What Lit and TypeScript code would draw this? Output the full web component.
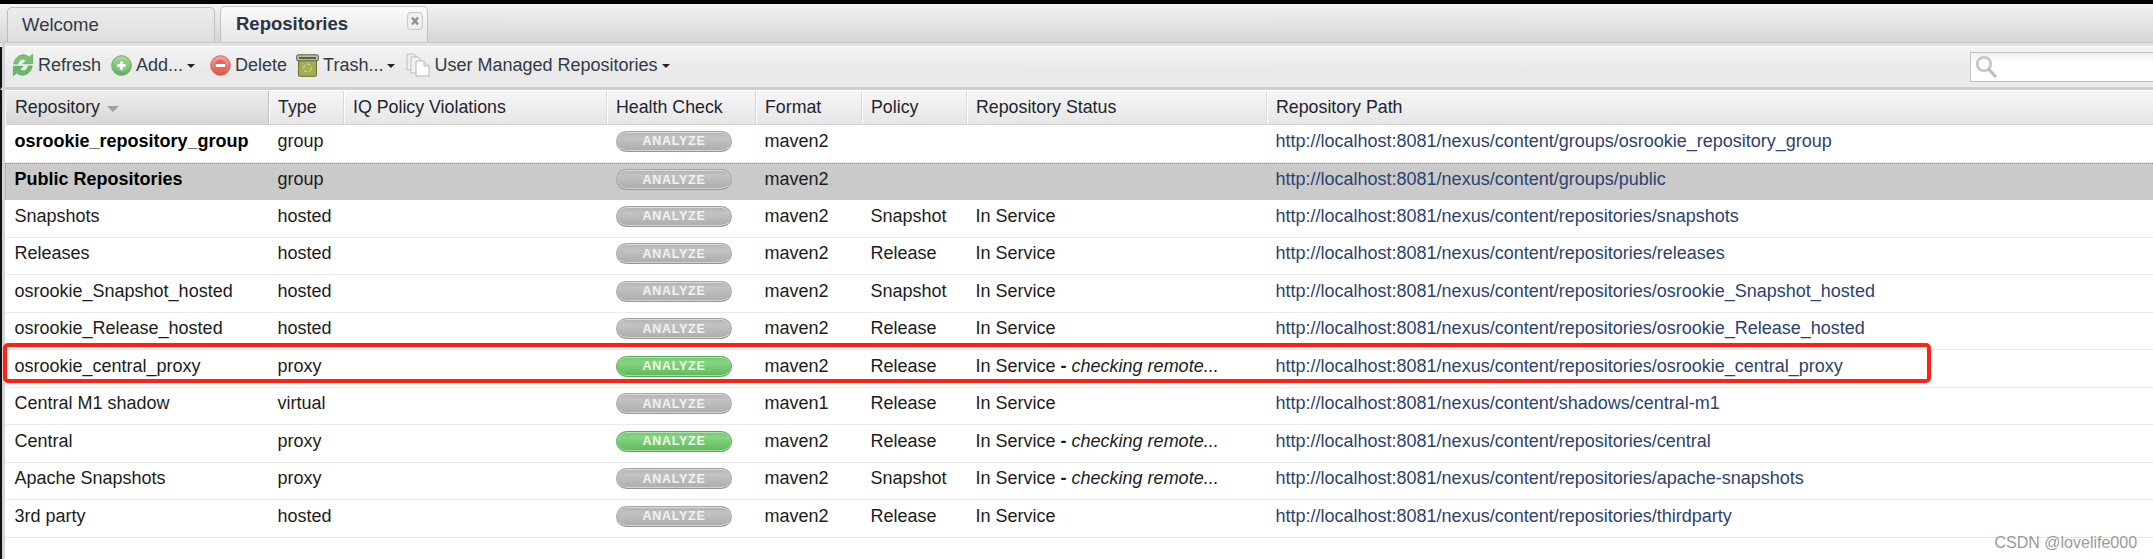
import { LitElement, html, css, svg } from "lit";
import { customElement } from "lit/decorators.js";

interface Row {
  name: string; type: string; green?: boolean; format: string; policy: string;
  status: string; checking?: boolean; path: string; bold?: boolean; selected?: boolean;
}

const P = "http://localhost:8081/nexus/content/";
const rows: Row[] = [
  { name: "osrookie_repository_group", type: "group", format: "maven2", policy: "", status: "", path: P + "groups/osrookie_repository_group", bold: true },
  { name: "Public Repositories", type: "group", format: "maven2", policy: "", status: "", path: P + "groups/public", bold: true, selected: true },
  { name: "Snapshots", type: "hosted", format: "maven2", policy: "Snapshot", status: "In Service", path: P + "repositories/snapshots" },
  { name: "Releases", type: "hosted", format: "maven2", policy: "Release", status: "In Service", path: P + "repositories/releases" },
  { name: "osrookie_Snapshot_hosted", type: "hosted", format: "maven2", policy: "Snapshot", status: "In Service", path: P + "repositories/osrookie_Snapshot_hosted" },
  { name: "osrookie_Release_hosted", type: "hosted", format: "maven2", policy: "Release", status: "In Service", path: P + "repositories/osrookie_Release_hosted" },
  { name: "osrookie_central_proxy", type: "proxy", green: true, format: "maven2", policy: "Release", status: "In Service", checking: true, path: P + "repositories/osrookie_central_proxy" },
  { name: "Central M1 shadow", type: "virtual", format: "maven1", policy: "Release", status: "In Service", path: P + "shadows/central-m1" },
  { name: "Central", type: "proxy", green: true, format: "maven2", policy: "Release", status: "In Service", checking: true, path: P + "repositories/central" },
  { name: "Apache Snapshots", type: "proxy", format: "maven2", policy: "Snapshot", status: "In Service", checking: true, path: P + "repositories/apache-snapshots" },
  { name: "3rd party", type: "hosted", format: "maven2", policy: "Release", status: "In Service", path: P + "repositories/thirdparty" },
];

const refreshIcon = svg`<svg class="ic i-refresh" viewBox="0 0 24 22"><path d="M3.500 10C4.500 4 9.500 .8 14 1.800c1.600.4 2.800 1.100 3.800 2.100L20.800 1v8.800h-8.800l3-3C13.800 5.700 12.200 5.300 10.700 5.700 8.800 6.300 7.700 7.800 7.300 10z" fill="#7cc276" stroke="#5aa85c" stroke-width=".7"/><path d="M20.500 12C19.500 18 14.500 21.200 10 20.200c-1.600-.4-2.800-1.100-3.800-2.100L3.200 21v-8.800h8.800l-3 3c1.200 1.100 2.800 1.500 4.300 1.100 1.900-.6 3-2.100 3.400-4.300z" fill="#69b569" stroke="#5aa85c" stroke-width=".7"/></svg>`;
const addIcon = svg`<svg class="ic i-circle" viewBox="0 0 21 21"><defs><linearGradient id="ga" x1="0" y1="0" x2="0" y2="1"><stop offset="0" stop-color="#a9dc9c"/><stop offset="1" stop-color="#5fb05c"/></linearGradient></defs><circle cx="10.500" cy="10.500" r="9.800" fill="url(#ga)" stroke="#6aa964"/><circle cx="10.500" cy="10.500" r="5.800" fill="#8ccb83"/><path d="M9 6.500h3V9h2.500v3H12v2.500H9V12H6.500V9H9z" fill="#fff"/></svg>`;
const delIcon = svg`<svg class="ic i-circle" viewBox="0 0 21 21"><defs><linearGradient id="gd" x1="0" y1="0" x2="0" y2="1"><stop offset="0" stop-color="#f3a79c"/><stop offset="1" stop-color="#dd5248"/></linearGradient></defs><circle cx="10.500" cy="10.500" r="9.800" fill="url(#gd)" stroke="#cf6a60"/><circle cx="10.500" cy="10.500" r="5.800" fill="#e4655a"/><rect x="5.800" y="9" width="9.400" height="3" rx=".6" fill="#fff"/></svg>`;
const trashIcon = svg`<svg class="ic i-trash" viewBox="0 0 23 23"><rect x="2.500" y="6" width="18" height="16.300" rx="1" fill="#a4ad4e" stroke="#6c6f3a"/><rect x=".6" y=".8" width="21.800" height="6" rx="1.500" fill="#b9bca0" stroke="#5f6240"/><rect x="3" y="3" width="17" height="2" fill="#5d5f48"/><circle cx="11.500" cy="14" r="3.800" fill="none" stroke="#c8d08a" stroke-width="1.300" stroke-dasharray="4 1.500"/></svg>`;
const docsIcon = svg`<svg class="ic i-docs" viewBox="0 0 24 24"><path d="M1 1h7l2 2v14H1z" fill="#efefef" stroke="#c2c2c2"/><path d="M5 4h7l2 2v14H5z" fill="#f2f2f2" stroke="#bdbdbd"/><path d="M10 8h8l5 5v10H10z" fill="#fff" stroke="#b8b8b8"/><path d="M18 8v5h5" fill="#e4e4e4" stroke="#b8b8b8"/></svg>`;
const caret = html`<span class="caret"></span>`;
const closeIcon = svg`<svg class="close" viewBox="0 0 16 18"><rect x=".6" y=".6" width="14.800" height="16.800" rx="3" fill="#f0f0f0" stroke="#c6c6c6"/><path d="M5 5.500l6 7M11 5.500l-6 7" stroke="#8d8d8d" stroke-width="2.400"/></svg>`;
const searchIcon = svg`<svg class="mag" viewBox="0 0 22 24"><circle cx="9" cy="9" r="6.800" fill="none" stroke="#c4c4c4" stroke-width="2.600"/><path d="M14 14.500l6 6.500" stroke="#bdbdbd" stroke-width="3.200" stroke-linecap="round"/></svg>`;

@customElement("app-root")
export class AppRoot extends LitElement {
  static styles = css`
    :host {
      display: block;
      position: relative;
      width: 2153px;
      height: 559px;
      overflow: hidden;
      background: #fff;
      font-family: "Liberation Sans", Arial, sans-serif;
      font-size: 18px;
      color: #1c1c1c;
    }
    .page { display: flex; flex-direction: column; height: 100%; box-sizing: border-box; border-top: 4px solid #000; }

    .tabs {
      height: 39px; flex: none; box-sizing: border-box; display: flex; align-items: flex-end; gap: 5px;
      padding-left: 7px; background: linear-gradient(#f2f2f2, #d6d6d6); border-bottom: 1px solid #c9c9c9;
    }
    .tab {
      box-sizing: border-box; width: 208px; height: 35px; border: 1px solid #bdbdbd; border-bottom: none;
      border-radius: 5px 5px 0 0; padding: 0 0 1px 14px; display: flex; align-items: center; font-size: 18.5px; color: #333a44;
      background: linear-gradient(#ececec, #dedede);
    }
    .tab.active {
      height: 36px; position: relative; padding-left: 15px; font-weight: bold; color: #2a3442;
      background: linear-gradient(#fafafa, #e6e6e6); border-color: #c2c2c2;
    }
    .close { position: absolute; right: 4px; top: 5px; width: 16px; height: 18px; }

    .sep { height: 4px; flex: none; background: linear-gradient(#e2e2e2 0 75%, #fff 75%); }

    .toolbar {
      height: 43px; flex: none; box-sizing: border-box; display: flex; align-items: center; padding: 0 0 4px 8px;
      background: linear-gradient(#f3f3f3, #e9e9e9 60%, #ececec); border-bottom: 3px solid #cfcfcf; border-left: 2px solid #111; color: #333a44;
    }
    .item { display: flex; align-items: center; white-space: nowrap; height: 26px; }
    .ic { flex: none; display: block; }
    .i-refresh { width: 26px; height: 24px; margin-right: 2px; }
    .i-circle { width: 21px; height: 21px; margin-right: 4px; }
    .i-trash { width: 23px; height: 23px; margin-right: 4px; }
    .i-docs { width: 24px; height: 24px; margin-right: 4px; }
    .m-add { margin-left: 10px; }
    .m-del { margin-left: 15px; }
    .m-trash { margin-left: 9px; }
    .m-user { margin-left: 11px; }
    .caret { width: 0; height: 0; border: 4px solid transparent; border-top: 4px solid #222; border-bottom: none; margin-left: 4px; margin-top: 2px; }
    .search {
      margin-left: auto; margin-top: 4px; width: 183px; height: 30px; box-sizing: border-box; border: 1px solid #c2c2c2; border-right: none;
      background: linear-gradient(#eef0f0, #fff 35%); padding: 2px 0 0 4px; display: flex; align-items: flex-start;
    }
    .mag { width: 22px; height: 24px; }

    .body { flex: 1; display: flex; flex-direction: column; border-left: 2px solid #111; position: relative; }
    .gutter { position: absolute; left: 0; top: -47px; bottom: 0; width: 3px; background: #d4d4d4; }
    .grid { margin-left: 3.5px; }
    .head, .row { display: grid; grid-template-columns: 263px 75px 263px 149px 106px 105px 300px 1fr; }
    .head { height: 34px; margin-top: 1px; box-sizing: border-box; background: linear-gradient(#f6f6f6, #e6e6e6); border-bottom: 1px solid #d2d2d2; font-size: 17.8px; }
    .hc {
      box-sizing: border-box; padding: 0 0 0 9.500px; display: flex; align-items: center; gap: 7px; color: #1f2530;
      border-right: 1px solid #d8d8d8; box-shadow: 1px 0 0 #fff; white-space: nowrap;
    }
    .hc:last-child { border-right: none; box-shadow: none; }
    .hc.sorted { background: linear-gradient(#eeeeee, #d7d7d7); border-right-color: #bdbdbd; }
    .sort { width: 0; height: 0; border: 6px solid transparent; border-top: 6px solid #a0a0a0; border-bottom: none; margin-top: 3px; }

    .row { height: 37.5px; box-sizing: border-box; border-bottom: 1px solid #e9e9e9; }
    .row.selected { background: #cacaca; border-top: 1px dotted #8f8f8f; border-left: 1px dotted #8f8f8f; border-bottom: none; margin-left: -1px; }
    .c { box-sizing: border-box; padding: 0 0 4.500px 9px; display: flex; align-items: center; white-space: nowrap; color: #1c1c1c; }
    .row.bold .name { font-weight: bold; color: #000; }
    .link { color: #2b4272; }
    .st { white-space: pre; }

    .pill {
      box-sizing: border-box; width: 116px; height: 21px; border-radius: 11px; display: flex; align-items: center; justify-content: center;
      font-size: 12.5px; font-weight: bold; letter-spacing: .75px; color: #f2f2f2; margin-left: .5px;
      background: linear-gradient(#b2b2b2, #c2c2c2 30%, #b8b8b8 65%, #acacac);
      border: 1px solid #a4a4a4; border-bottom-color: #969696; box-shadow: inset 0 1px 0 #dcdcdc, inset 0 -1px 0 #d4d4d4;
    }
    .pill.green {
      color: #eef9ea; background: linear-gradient(#74c970, #85d481 30%, #70c76c 65%, #5fb65c);
      border-color: #55a656; box-shadow: inset 0 1px 0 #b0e5ac, inset 0 -1px 0 #a6dfa1;
    }

    .redbox {
      position: absolute; left: 3px; top: 343px; width: 1928px; height: 40px; box-sizing: border-box;
      border: 4px solid #ff2114; border-radius: 5px; pointer-events: none;
    }
    .mark { position: absolute; left: 1994.500px; top: 534px; font-size: 16px; color: #9a9a9a; white-space: nowrap; }
  `;

  render() {
    return html`
      <div class="page">
        <div class="tabs">
          <div class="tab">Welcome</div>
          <div class="tab active">Repositories${closeIcon}</div>
        </div>
        <div class="sep"></div>
        <div class="toolbar">
          <div class="item">${refreshIcon}Refresh</div>
          <div class="item m-add">${addIcon}Add...${caret}</div>
          <div class="item m-del">${delIcon}Delete</div>
          <div class="item m-trash">${trashIcon}Trash...${caret}</div>
          <div class="item m-user">${docsIcon}User Managed Repositories${caret}</div>
          <div class="search">${searchIcon}</div>
        </div>
        <div class="body">
          <div class="gutter"></div>
          <div class="grid">
            <div class="head">
              <div class="hc sorted">Repository<span class="sort"></span></div>
              <div class="hc">Type</div>
              <div class="hc">IQ Policy Violations</div>
              <div class="hc">Health Check</div>
              <div class="hc">Format</div>
              <div class="hc">Policy</div>
              <div class="hc">Repository Status</div>
              <div class="hc">Repository Path</div>
            </div>
            ${rows.map(
              (r) => html`
                <div class="row ${r.bold ? "bold" : ""} ${r.selected ? "selected" : ""}">
                  <div class="c name">${r.name}</div>
                  <div class="c">${r.type}</div>
                  <div class="c"></div>
                  <div class="c"><div class="pill ${r.green ? "green" : ""}">ANALYZE</div></div>
                  <div class="c">${r.format}</div>
                  <div class="c">${r.policy}</div>
                  <div class="c"><span class="st">${r.status}${r.checking ? html` <b>-</b> <i>checking remote...</i>` : ""}</span></div>
                  <div class="c link">${r.path}</div>
                </div>
              `
            )}
          </div>
        </div>
      </div>
      <div class="redbox"></div>
      <div class="mark">CSDN @lovelife000</div>
    `;
  }
}
